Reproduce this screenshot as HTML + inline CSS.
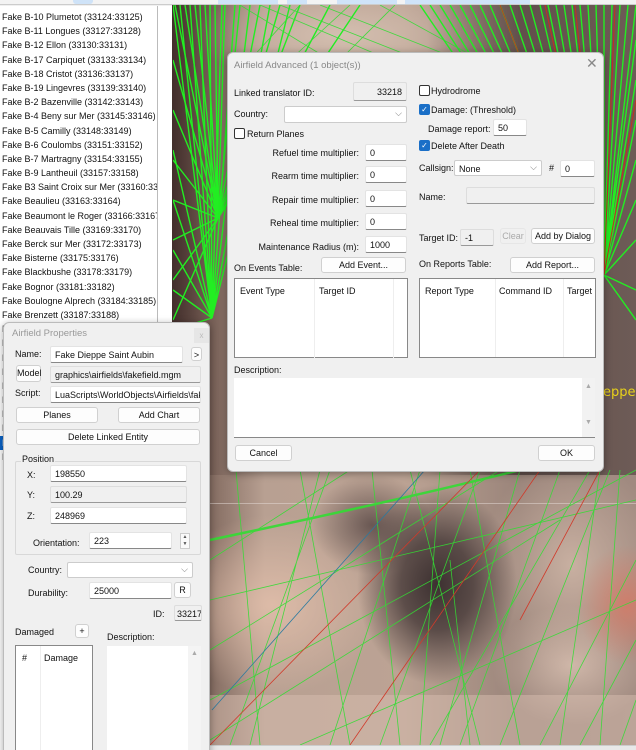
<!DOCTYPE html>
<html><head><meta charset="utf-8"><style>
*{box-sizing:border-box;margin:0;padding:0}
html,body{width:636px;height:750px;overflow:hidden}
body{position:relative;background:#f0f0f0;font-family:"Liberation Sans",sans-serif;font-size:9px;color:#111}
.a{position:absolute;white-space:nowrap}
.inp{position:absolute;background:#fff;border:1px solid #e3e3e3;border-bottom:1px solid #888;border-radius:2px;padding:3px 4px;font-size:9px;white-space:nowrap;overflow:hidden}
.gr{background:#f0f0f0;border:1px solid #ddd;border-bottom:1px solid #999}
.btn{position:absolute;background:#fdfdfd;border:1px solid #d0d0d0;border-radius:3px;text-align:center;font-size:9px;line-height:14px;white-space:nowrap}
.cb{position:absolute;width:11px;height:11px;border:1px solid #333;border-radius:2px;background:#fff}
.cbc{position:absolute;width:11px;height:11px;border-radius:2px;background:#1a6fc7;color:#fff;font-size:8px;line-height:11px;text-align:center}
.dlg{position:absolute;background:#f0f0f0;border:1px solid #bbb;border-radius:6px;box-shadow:0 2px 8px rgba(0,0,0,.35)}
.list div{height:14.2px;line-height:14.2px;font-size:9px;padding-left:2px;white-space:nowrap}
.tbl{position:absolute;background:#fff;border:1px solid #888}
</style></head><body>
<div class="a" style="left:0;top:0;width:636px;height:5px;background:#f3f3f3;border-bottom:1px solid #ccc"></div>
<div class="a" style="left:73px;top:0;width:20px;height:4px;background:#cfe3f8;border-radius:0 0 3px 3px"></div>
<div class="a" style="left:218px;top:0;width:60px;height:4px;background:#cfe3f8"></div>
<div class="a" style="left:287px;top:0;width:20px;height:4px;background:#cfe3f8"></div>
<div class="a" style="left:337px;top:0;width:60px;height:4px;background:#cfe3f8"></div>
<div class="a" style="left:405px;top:0;width:125px;height:4px;background:#cfe3f8"></div>

<!-- map -->
<div class="a" style="left:172px;top:5px;width:464px;height:740px;overflow:hidden;background:
radial-gradient(ellipse 80px 100px at 265px 580px,#3d3131 0%,rgba(61,49,49,.75) 45%,rgba(61,49,49,0) 100%),
radial-gradient(ellipse 60px 50px at 200px 520px,rgba(70,55,55,.7),rgba(70,55,55,0)),
radial-gradient(ellipse 50px 60px at 455px 600px,rgba(215,120,100,.8),rgba(215,120,100,0)),
radial-gradient(ellipse 90px 110px at 400px 560px,rgba(205,180,165,.9),rgba(205,180,165,0)),
radial-gradient(ellipse 110px 90px at 100px 600px,rgba(225,190,170,.9),rgba(225,190,170,0)),
radial-gradient(ellipse 80px 60px at 400px 660px,rgba(220,195,180,.8),rgba(220,195,180,0)),
radial-gradient(ellipse 150px 50px at 170px 30px,#d4bfb0,rgba(212,191,176,0)),
linear-gradient(90deg,#4a3632 0,#7a6258 6%,#b8a092 20%,#bca394 50%,#9a847a 75%,#a08a80 100%);">
<div class="a" style="left:0;top:0;width:464px;height:470px;background:linear-gradient(90deg,rgba(60,40,38,.5),rgba(0,0,0,0) 15%,rgba(0,0,0,0) 55%,rgba(60,45,45,.6) 75%,rgba(60,45,45,.5))"></div>
<div class="a" style="left:0;top:498px;width:464px;height:1px;background:rgba(230,220,215,.5)"></div>
<div class="a" style="left:0;top:690px;width:464px;height:50px;background:rgba(215,190,175,.5)"></div>
<div class="a" style="left:431px;top:380px;color:#e8d21a;font-size:13px;font-family:'DejaVu Sans',sans-serif">eppe</div>
</div>
<svg class="a" style="left:0;top:0" width="636" height="750" viewBox="0 0 636 750">
<defs><clipPath id="m"><rect x="173" y="5" width="463" height="740"/></clipPath></defs>
<g clip-path="url(#m)" fill="none">
<g stroke="#22ee22" stroke-width="1.4">
<path d="M604 275L420 5M604 275L430 5M604 275L440 5M604 275L450 5M604 275L460 5M604 275L470 5M604 275L480 5M604 275L490 5M604 275L500 5M604 275L510 5M604 275L520 5M604 275L530 5M604 275L540 5M604 275L548 5M604 275L556 5M604 275L564 5M604 275L572 5M604 275L580 5M604 275L588 5M604 275L596 5M604 275L604 5M604 275L612 5M604 275L620 5M604 275L628 5M604 275L636 5M604 275L636 40M604 275L636 80M604 275L636 120M604 275L636 160M604 275L636 200M604 275L636 240M604 275L636 290M604 275L636 320"/>
<path d="M218 218L175 5M218 218L185 5M218 218L195 5M218 218L205 5M218 218L215 5M218 218L225 5M218 218L240 5M218 218L260 5M218 218L280 5M218 218L300 5M218 218L330 5M218 218L360 5M218 218L173 60M218 218L173 110M218 218L173 160M218 218L173 200M218 218L173 240M218 218L173 280M218 218L173 320"/>
<path d="M212 318L173 5M212 318L180 5M212 318L190 5M212 318L200 5M212 318L210 5M212 318L222 5M212 318L235 5M212 318L250 5M212 318L270 5M212 318L290 5M212 318L173 150M212 318L173 200M212 318L173 250M212 318L173 290M212 318L173 330"/>
</g>
<g stroke="#33dd33" stroke-width="0.8" opacity=".9">
<path d="M240 5L330 60M280 5L420 60M300 5L250 60M350 5L290 60M380 5L480 60M395 5L340 60M260 5L390 60M320 5L460 60"/>
<path d="M230 745L330 470M250 745L320 470M330 745L420 470M350 745L300 470M380 745L480 470M420 745L440 470M440 745L520 470M460 745L560 470M500 745L610 470M520 745L470 470M540 745L636 560M560 745L600 470M580 745L636 640M600 745L620 470M210 700L636 470M210 650L500 470M210 740L560 520M300 745L636 600M210 560L350 470M260 745L236 470M400 745L372 470M470 745L450 560M620 745L636 700M210 600L636 500M430 745L590 470M480 745L410 470"/>
<path d="M210 540Q400 500 520 470" stroke-width="2.5"/>
</g>
<path d="M210 745L480 470M350 745L540 470M520 620L600 470" stroke="#d03a2a" stroke-width="0.8"/>
<path d="M212 710L425 470" stroke="#2a7aa0" stroke-width="0.8"/>
<g stroke="#c63020" stroke-width="1"><path d="M604 275L500 5M604 275L545 5M604 275L575 5M604 275L615 5M604 275L636 100"/></g>
</g>
</svg>
<div class="a" style="left:0;top:745px;width:636px;height:5px;background:#e8e8e8;border-top:1px solid #ccc"></div>

<!-- list -->
<div class="a list" style="left:0;top:6px;width:172px;height:744px;background:#fff;border-right:1px solid #aaa;overflow:hidden;padding-top:4px">
<div>Fake B-10 Plumetot (33124:33125)</div><div>Fake B-11 Longues (33127:33128)</div><div>Fake B-12 Ellon (33130:33131)</div><div>Fake B-17 Carpiquet (33133:33134)</div><div>Fake B-18 Cristot (33136:33137)</div><div>Fake B-19 Lingevres (33139:33140)</div><div>Fake B-2 Bazenville (33142:33143)</div><div>Fake B-4 Beny sur Mer (33145:33146)</div><div>Fake B-5 Camilly (33148:33149)</div><div>Fake B-6 Coulombs (33151:33152)</div><div>Fake B-7 Martragny (33154:33155)</div><div>Fake B-9 Lantheuil (33157:33158)</div><div>Fake B3 Saint Croix sur Mer (33160:33161)</div><div>Fake Beaulieu (33163:33164)</div><div>Fake Beaumont le Roger (33166:33167)</div><div>Fake Beauvais Tille (33169:33170)</div><div>Fake Berck sur Mer (33172:33173)</div><div>Fake Bisterne (33175:33176)</div><div>Fake Blackbushe (33178:33179)</div><div>Fake Bognor (33181:33182)</div><div>Fake Boulogne Alprech (33184:33185)</div><div>Fake Brenzett (33187:33188)</div><div>F</div><div>F</div><div>F</div><div>F</div><div>F</div><div>F</div><div>F</div><div>F</div><div style="background:#0a64c8;color:#fff;width:6px">F</div><div>F</div>
</div>
<div class="a" style="left:157px;top:6px;width:1px;height:480px;background:#bbb"></div>
<div class="a" style="left:158px;top:6px;width:14px;height:480px;background:#fff"></div>

<!-- Airfield Properties -->
<div class="dlg" style="left:3px;top:322px;width:207px;height:440px;border-radius:6px 6px 0 0">
<div class="a" style="left:8px;top:5px;color:#999;font-size:9.5px">Airfield Properties</div>
<div class="a" style="left:190px;top:5px;width:15px;height:15px;background:#e6e6e6;color:#bbb;font-size:8px;text-align:center;line-height:15px">x</div>
</div>
<div class="a" style="left:15px;top:349px">Name:</div>
<div class="inp" style="left:50px;top:346px;width:133px;height:17px">Fake Dieppe Saint Aubin</div>
<div class="btn" style="left:191px;top:347px;width:11px;height:14px">&gt;</div>
<div class="btn" style="left:16px;top:365px;width:25px;height:17px;line-height:15px">Model</div>
<div class="inp gr" style="left:50px;top:366px;width:151px;height:17px">graphics\airfields\fakefield.mgm</div>
<div class="a" style="left:15px;top:388px">Script:</div>
<div class="inp" style="left:50px;top:386px;width:151px;height:17px">LuaScripts\WorldObjects\Airfields\fake</div>
<div class="btn" style="left:16px;top:407px;width:82px;height:16px">Planes</div>
<div class="btn" style="left:118px;top:407px;width:82px;height:16px">Add Chart</div>
<div class="btn" style="left:16px;top:429px;width:184px;height:16px">Delete Linked Entity</div>
<div class="a" style="left:15px;top:461px;width:186px;height:94px;border:1px solid #d8d8d8;border-radius:2px"></div>
<div class="a" style="left:21px;top:454px;background:#f0f0f0;padding:0 1px">Position</div>
<div class="a" style="left:27px;top:470px">X:</div><div class="inp" style="left:50px;top:465px;width:137px;height:17px">198550</div>
<div class="a" style="left:27px;top:490px">Y:</div><div class="inp gr" style="left:50px;top:486px;width:137px;height:17px">100.29</div>
<div class="a" style="left:27px;top:511px">Z:</div><div class="inp" style="left:50px;top:507px;width:137px;height:17px">248969</div>
<div class="a" style="left:33px;top:538px">Orientation:</div><div class="inp" style="left:89px;top:532px;width:83px;height:17px">223</div>
<div class="a" style="left:180px;top:533px;width:10px;height:16px;border:1px solid #ccc;background:#fafafa;font-size:5px;line-height:7px;text-align:center;color:#555">▲<br>▼</div>
<div class="a" style="left:28px;top:565px">Country:</div>
<div class="inp" style="left:67px;top:562px;width:126px;height:16px;border-color:#ccc"><span style="position:absolute;right:4px;top:1px;color:#777">⌵</span></div>
<div class="a" style="left:28px;top:588px">Durability:</div><div class="inp" style="left:89px;top:582px;width:83px;height:17px">25000</div>
<div class="btn" style="left:174px;top:582px;width:17px;height:16px">R</div>
<div class="a" style="left:153px;top:609px">ID:</div>
<div class="inp gr" style="left:174px;top:605px;width:28px;height:16px;padding:3px 2px">33217</div>
<div class="a" style="left:15px;top:627px">Damaged</div>
<div class="btn" style="left:75px;top:624px;width:14px;height:14px;line-height:12px">+</div>
<div class="a" style="left:107px;top:632px">Description:</div>
<div class="tbl" style="left:15px;top:645px;width:78px;height:110px">
<div class="a" style="left:6px;top:7px">#</div><div class="a" style="left:28px;top:7px">Damage</div>
<div class="a" style="left:24px;top:0;width:1px;height:110px;background:#eee"></div>
</div>
<div class="a" style="left:107px;top:646px;width:94px;height:104px;background:#fff"><div class="a" style="right:0;top:0;width:13px;height:104px;background:#f4f4f4;color:#aaa;font-size:7px;text-align:center;padding-top:4px">▲</div></div>

<!-- Airfield Advanced -->
<div class="dlg" style="left:227px;top:52px;width:377px;height:420px">
<div class="a" style="left:6px;top:7px;color:#888;font-size:9.5px">Airfield Advanced (1 object(s))</div>
<div class="a" style="left:358px;top:2px;color:#888;font-size:14px">✕</div>
</div>
<div class="a" style="left:234px;top:88px">Linked translator ID:</div>
<div class="inp gr" style="left:353px;top:82px;width:54px;height:19px;text-align:right;padding-top:4px">33218</div>
<div class="a" style="left:234px;top:109px">Country:</div>
<div class="inp" style="left:284px;top:106px;width:123px;height:17px;border-color:#ccc"><span style="position:absolute;right:4px;top:1px;color:#777">⌵</span></div>
<div class="cb" style="left:234px;top:128px"></div><div class="a" style="left:247px;top:129px">Return Planes</div>
<div class="a" style="left:239px;top:148px;width:120px;text-align:right">Refuel time multiplier:</div><div class="inp" style="left:365px;top:144px;width:42px;height:17px">0</div>
<div class="a" style="left:239px;top:171px;width:120px;text-align:right">Rearm time multiplier:</div><div class="inp" style="left:365px;top:166px;width:42px;height:17px">0</div>
<div class="a" style="left:239px;top:195px;width:120px;text-align:right">Repair time multiplier:</div><div class="inp" style="left:365px;top:190px;width:42px;height:17px">0</div>
<div class="a" style="left:239px;top:218px;width:120px;text-align:right">Reheal time multiplier:</div><div class="inp" style="left:365px;top:213px;width:42px;height:17px">0</div>
<div class="a" style="left:229px;top:242px;width:130px;text-align:right">Maintenance Radius (m):</div><div class="inp" style="left:365px;top:236px;width:42px;height:17px">1000</div>
<div class="a" style="left:234px;top:263px">On Events Table:</div>
<div class="btn" style="left:321px;top:257px;width:85px;height:16px">Add Event...</div>
<div class="tbl" style="left:234px;top:278px;width:174px;height:80px">
<div class="a" style="left:5px;top:7px">Event Type</div><div class="a" style="left:84px;top:7px">Target ID</div>
<div class="a" style="left:79px;top:0;width:1px;height:80px;background:#eee"></div><div class="a" style="left:158px;top:0;width:1px;height:80px;background:#eee"></div>
</div>
<div class="cb" style="left:419px;top:85px"></div><div class="a" style="left:431px;top:86px">Hydrodrome</div>
<div class="cbc" style="left:419px;top:104px">✓</div><div class="a" style="left:431px;top:105px">Damage: (Threshold)</div>
<div class="a" style="left:428px;top:124px">Damage report:</div><div class="inp" style="left:493px;top:119px;width:34px;height:17px">50</div>
<div class="cbc" style="left:419px;top:140px">✓</div><div class="a" style="left:431px;top:141px">Delete After Death</div>
<div class="a" style="left:419px;top:163px">Callsign:</div>
<div class="inp" style="left:454px;top:160px;width:88px;height:16px;border-color:#ccc">None<span style="position:absolute;right:4px;top:1px;color:#777">⌵</span></div>
<div class="a" style="left:549px;top:163px">#</div><div class="inp" style="left:560px;top:160px;width:35px;height:17px">0</div>
<div class="a" style="left:419px;top:192px">Name:</div><div class="inp gr" style="left:466px;top:187px;width:129px;height:17px"></div>
<div class="a" style="left:419px;top:233px">Target ID:</div><div class="inp gr" style="left:460px;top:229px;width:34px;height:17px">-1</div>
<div class="btn" style="left:500px;top:228px;width:26px;height:16px;color:#aaa;background:#f0f0f0;border-color:#e6e6e6">Clear</div>
<div class="btn" style="left:531px;top:228px;width:64px;height:16px">Add by Dialog</div>
<div class="a" style="left:419px;top:259px">On Reports Table:</div>
<div class="btn" style="left:510px;top:257px;width:85px;height:16px">Add Report...</div>
<div class="tbl" style="left:419px;top:278px;width:177px;height:80px;overflow:hidden">
<div class="a" style="left:5px;top:7px">Report Type</div><div class="a" style="left:79px;top:7px">Command ID</div><div class="a" style="left:147px;top:7px">Target</div>
<div class="a" style="left:75px;top:0;width:1px;height:80px;background:#eee"></div><div class="a" style="left:143px;top:0;width:1px;height:80px;background:#eee"></div>
</div>
<div class="a" style="left:234px;top:365px">Description:</div>
<div class="a" style="left:234px;top:378px;width:361px;height:60px;background:#fff;border-bottom:1px solid #888"><div class="a" style="right:0;top:0;width:13px;height:59px;background:#f2f2f2;color:#aaa;font-size:7px;text-align:center;line-height:12px;padding-top:3px">▲<br><br><br>▼</div></div>
<div class="btn" style="left:235px;top:445px;width:57px;height:16px">Cancel</div>
<div class="btn" style="left:538px;top:445px;width:57px;height:16px">OK</div>
</body></html>
